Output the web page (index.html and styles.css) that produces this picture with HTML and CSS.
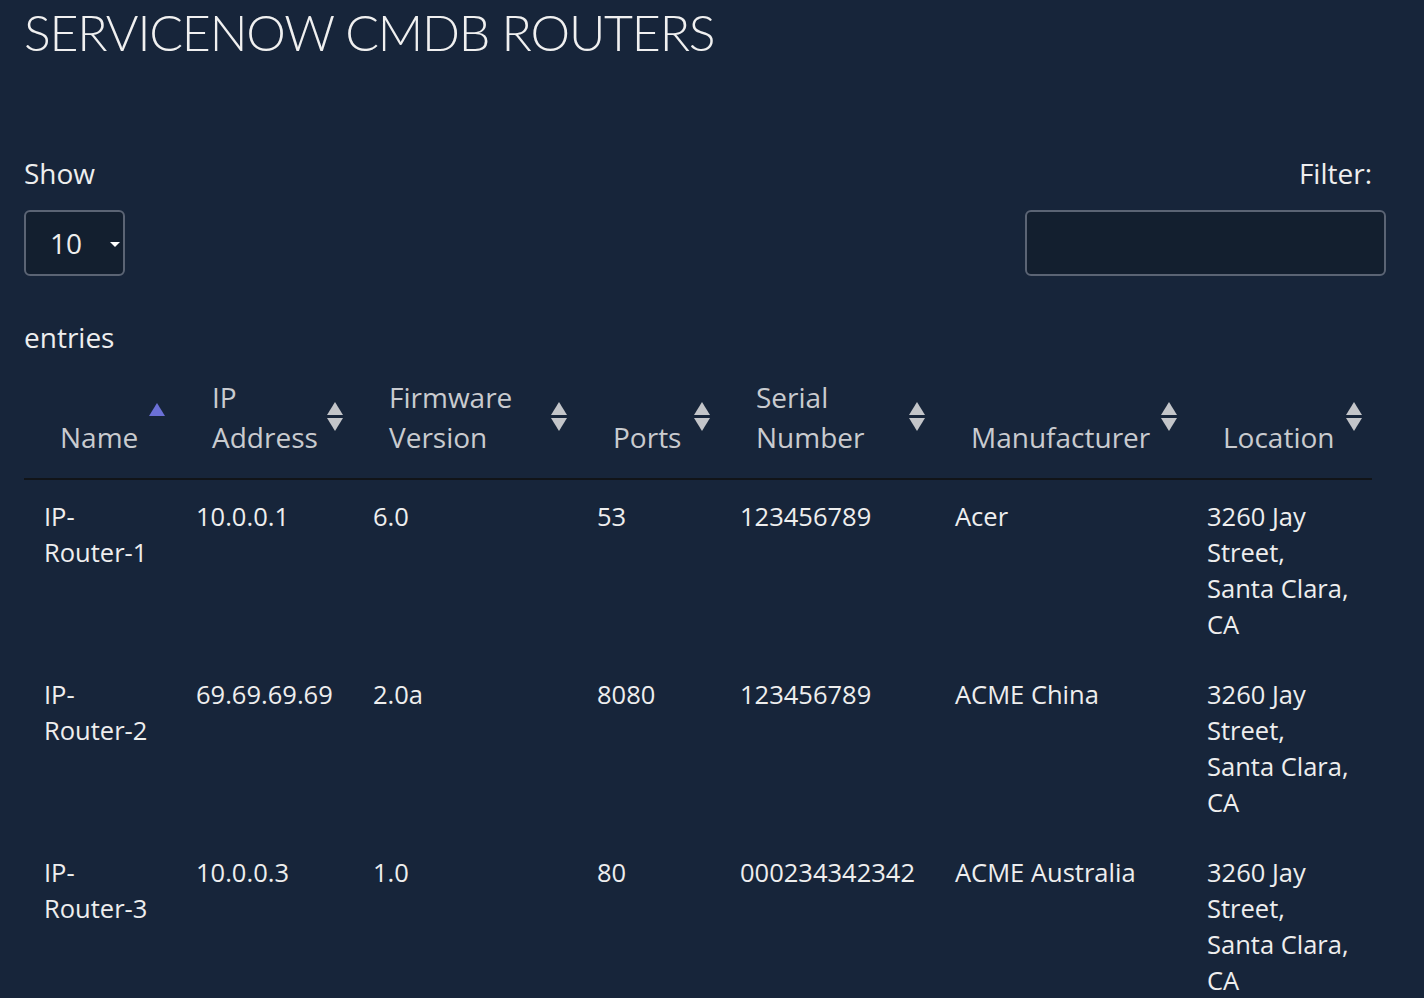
FILE: index.html
```html
<!DOCTYPE html>
<html lang="en">
<head>
<meta charset="utf-8">
<title>ServiceNow CMDB Routers</title>
<link rel="stylesheet" href="styles.css">
</head>
<body>
<div class="page">
  <h1 class="title">SERVICENOW CMDB ROUTERS</h1>
  <div class="controls">
    <div class="length">
      <span class="lbl">Show</span>
      <div class="select"><span class="val">10</span><span class="caret"></span></div>
      <span class="lbl entries">entries</span>
    </div>
    <div class="filter">
      <span class="lbl filter-lbl">Filter:</span>
      <div class="input"></div>
    </div>
  </div>
  <table class="grid">
    <colgroup>
      <col style="width:152px">
      <col style="width:177px">
      <col style="width:224px">
      <col style="width:143px">
      <col style="width:215px">
      <col style="width:252px">
      <col style="width:185px">
    </colgroup>
    <thead>
      <tr>
        <th class="asc">Name</th>
        <th class="both">IP Address</th>
        <th class="both">Firmware Version</th>
        <th class="both">Ports</th>
        <th class="both">Serial Number</th>
        <th class="both">Manufacturer</th>
        <th class="both">Location</th>
      </tr>
    </thead>
    <tbody>
      <tr>
        <td>IP-Router-1</td>
        <td>10.0.0.1</td>
        <td>6.0</td>
        <td>53</td>
        <td>123456789</td>
        <td>Acer</td>
        <td>3260 Jay Street, Santa Clara, CA</td>
      </tr>
      <tr>
        <td>IP-Router-2</td>
        <td>69.69.69.69</td>
        <td>2.0a</td>
        <td>8080</td>
        <td>123456789</td>
        <td>ACME China</td>
        <td>3260 Jay Street, Santa Clara, CA</td>
      </tr>
      <tr>
        <td>IP-Router-3</td>
        <td>10.0.0.3</td>
        <td>1.0</td>
        <td>80</td>
        <td>000234342342</td>
        <td>ACME Australia</td>
        <td>3260 Jay Street, Santa Clara, CA</td>
      </tr>
    </tbody>
  </table>
</div>
</body>
</html>
```
FILE: styles.css
```css
html, body {
  margin: 0;
  padding: 0;
  background: #17253a;
}
body {
  font-family: "Open Sans", "Noto Sans", sans-serif;
  font-size: 25.5px;
  line-height: 36px;
  color: #eeeeee;
}
.page {
  padding: 0 24px;
}
.title {
  margin: 0;
  padding-top: 2px;
  font-family: Lato, "Open Sans", sans-serif;
  font-weight: 300;
  font-size: 50px;
  line-height: 60px;
  color: #f0f0f0;
  letter-spacing: -1.2px;
}
.controls {
  display: flex;
  justify-content: space-between;
  margin-top: 93px;
  width: 1362px;
  font-size: 28px;
}
.length {
  display: flex;
  flex-direction: column;
  align-items: flex-start;
}
.lbl {
  display: block;
  height: 36px;
}
.select {
  margin-top: 19px;
  width: 97px;
  height: 62px;
  border: 2px solid #5b6474;
  border-radius: 6px;
  background: #131f2f;
  display: flex;
  align-items: center;
  position: relative;
}
.select .val {
  margin-left: 24px;
  font-size: 28px;
}
.caret {
  position: absolute;
  right: 3px;
  top: 30px;
  width: 0;
  height: 0;
  border-left: 5px solid transparent;
  border-right: 5px solid transparent;
  border-top: 5px solid #ffffff;
}
.entries {
  margin-top: 43px;
}
.filter {
  display: flex;
  flex-direction: column;
  align-items: flex-end;
}
.filter-lbl {
  margin-right: 14px;
}
.input {
  margin-top: 19px;
  width: 357px;
  height: 62px;
  border: 2px solid #5b6474;
  border-radius: 6px;
  background: #131f2f;
}
.grid {
  margin-top: 2px;
  width: 1348px;
  table-layout: fixed;
  border-collapse: collapse;
  border-spacing: 0;
}
.grid th {
  position: relative;
  text-align: left;
  vertical-align: bottom;
  font-weight: 400;
  font-size: 28px;
  color: #c9cbcf;
  line-height: 40px;
  padding: 20px 36px 21px 36px;
  border-bottom: 2px solid #111418;
}
.grid td {
  vertical-align: top;
  padding: 18px 20px 16px 20px;
}
.grid th.asc::after {
  content: "";
  position: absolute;
  right: 11px;
  top: 46px;
  width: 0;
  height: 0;
  border-left: 8px solid transparent;
  border-right: 8px solid transparent;
  border-bottom: 13px solid #6b70d6;
}
.grid th.both::before {
  content: "";
  position: absolute;
  right: 10px;
  top: 45px;
  width: 0;
  height: 0;
  border-left: 8px solid transparent;
  border-right: 8px solid transparent;
  border-bottom: 13px solid #c3c5c9;
}
.grid th.both::after {
  content: "";
  position: absolute;
  right: 10px;
  top: 61px;
  width: 0;
  height: 0;
  border-left: 8px solid transparent;
  border-right: 8px solid transparent;
  border-top: 13px solid #c3c5c9;
}
```
